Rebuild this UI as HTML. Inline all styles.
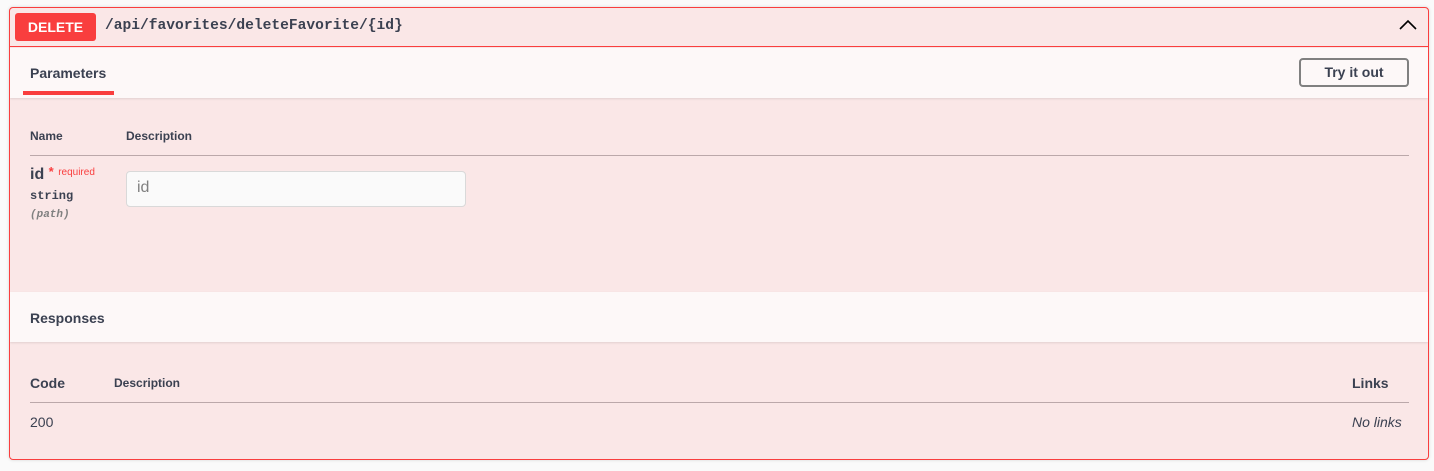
<!DOCTYPE html>
<html><head><meta charset="utf-8"><style>
*{margin:0;padding:0;box-sizing:border-box}
body{width:1434px;height:471px;background:#fafafa;font-family:"Liberation Sans",sans-serif;color:#3b4151;position:relative;overflow:hidden}
.a{position:absolute}
.box{left:9px;top:7px;width:1420px;height:453px;border:1px solid #f93e3e;border-radius:4px;background:#fae7e7;box-shadow:0 0 3px rgba(0,0,0,.15);overflow:hidden}
.mono{font-family:"Liberation Mono",monospace}
</style></head><body>
<div class="a box">
  <div class="a" style="left:0;top:0;width:1418px;height:39px;border-bottom:1px solid #f93e3e"></div>
  <div class="a" style="left:5px;top:5px;width:81px;height:28px;background:#f93e3e;border-radius:3px;color:#fff;font-weight:bold;font-size:14px;line-height:28px;text-align:center">DELETE</div>
  <div class="a mono" style="left:95px;top:10px;font-size:14.6px;font-weight:bold;color:#3b4151">/api/favorites/deleteFavorite/{id}</div>
  <svg class="a" style="left:1388px;top:10px" width="20" height="14" viewBox="0 0 20 14"><path d="M2 11 L10 3 L18 11" fill="none" stroke="#000" stroke-width="1.6"/></svg>
  <div class="a" style="left:0;top:40px;width:1418px;height:50px;background:#fdf8f8;box-shadow:0 1px 2px rgba(0,0,0,.1)"></div>
  <div class="a" style="left:20px;top:57px;font-size:14px;font-weight:bold">Parameters</div>
  <div class="a" style="left:13px;top:83px;width:91px;height:4px;background:#f93e3e"></div>
  <div class="a" style="left:1289px;top:50px;width:110px;height:29px;border:2px solid #808080;border-radius:4px;background:#fdf8f8;font-size:14px;font-weight:bold;text-align:center;line-height:25px">Try it out</div>
  <div class="a" style="left:20px;top:121px;font-size:12px;font-weight:bold">Name</div>
  <div class="a" style="left:116px;top:121px;font-size:12px;font-weight:bold">Description</div>
  <div class="a" style="left:20px;top:147px;width:1379px;height:1px;background:#bba8aa"></div>
  <div class="a" style="left:20px;top:158px;font-size:16px;font-weight:bold">id <span style="color:#f93e3e;font-size:13px;position:relative;top:-3px">*</span> <span style="color:#f93e3e;font-size:10px;font-weight:normal;position:relative;top:-4px">required</span></div>
  <div class="a mono" style="left:20px;top:181px;font-size:12px;font-weight:bold">string</div>
  <div class="a mono" style="left:20px;top:201px;font-size:11px;font-style:italic;color:#808080;font-weight:bold">(path)</div>
  <div class="a" style="left:116px;top:163px;width:340px;height:36px;border:1px solid #d9d9d9;border-radius:4px;background:#fafafa;font-size:16px;color:#808080;padding:7px 10px">id</div>
  <div class="a" style="left:0;top:284px;width:1418px;height:50px;background:#fdf8f8;box-shadow:0 1px 2px rgba(0,0,0,.1)"></div>
  <div class="a" style="left:20px;top:302px;font-size:14px;font-weight:bold">Responses</div>
  <div class="a" style="left:20px;top:367px;font-size:14px;font-weight:bold">Code</div>
  <div class="a" style="left:104px;top:368px;font-size:12px;font-weight:bold">Description</div>
  <div class="a" style="left:1342px;top:367px;font-size:14px;font-weight:bold">Links</div>
  <div class="a" style="left:20px;top:394px;width:1379px;height:1px;background:#bba8aa"></div>
  <div class="a" style="left:20px;top:406px;font-size:14px">200</div>
  <div class="a" style="left:1342px;top:406px;font-size:14px;font-style:italic">No links</div>
</div>
</body></html>
